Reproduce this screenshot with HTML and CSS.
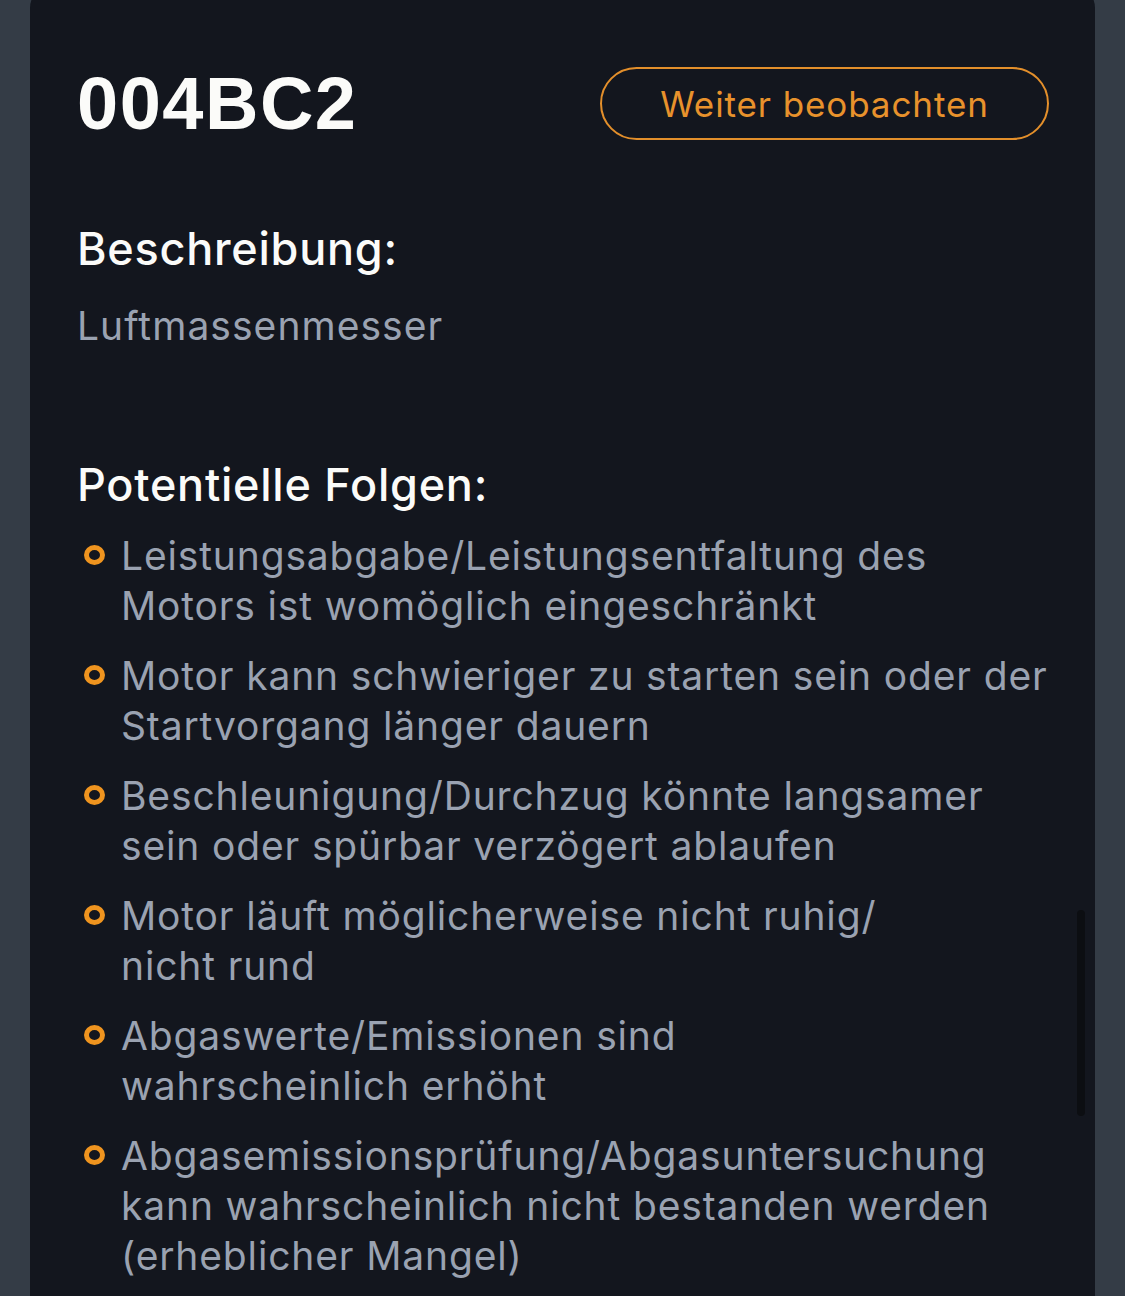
FILE: index.html
```html
<!DOCTYPE html>
<html>
<head>
    <title>004BC2</title>
    <link rel="stylesheet" href="styles.css">
</head>
<body>

<div class="card">
    <div class="head">
        <div class="code">004BC2</div>
        <a class="watch" href="#">Weiter beobachten</a>
    </div>

    <div class="label">Beschreibung:</div>
    <div class="desc">Luftmassenmesser</div>

    <div class="label label-list">Potentielle Folgen:</div>
    <ul class="effects">
        <li><span class="dot"></span><span class="txt">Leistungsabgabe/Leistungsentfaltung des<br>Motors ist womöglich eingeschränkt</span></li>
        <li><span class="dot"></span><span class="txt">Motor kann schwieriger zu starten sein oder der<br>Startvorgang länger dauern</span></li>
        <li><span class="dot"></span><span class="txt">Beschleunigung/Durchzug könnte langsamer<br>sein oder spürbar verzögert ablaufen</span></li>
        <li><span class="dot"></span><span class="txt">Motor läuft möglicherweise nicht ruhig/<br>nicht rund</span></li>
        <li><span class="dot"></span><span class="txt">Abgaswerte/Emissionen sind<br>wahrscheinlich erhöht</span></li>
        <li><span class="dot"></span><span class="txt">Abgasemissionsprüfung/Abgasuntersuchung<br>kann wahrscheinlich nicht bestanden werden<br>(erheblicher Mangel)</span></li>
    </ul>

    <div class="scrollbar"></div>
</div>

</body>
</html>
```

FILE: styles.css
```css
BODY {
    margin : 0;
    background : #343c46;
    font-family : Inter, "Noto Sans", sans-serif;
    overflow : hidden;
}
.card {
    position : relative;
    margin : -16px 30px 0 30px;
    padding : 77px 46px 60px 47px;
    background : #13161e;
    border-radius : 24px;
    min-height : 1300px;
}
.head {
    display : flex;
    justify-content : space-between;
    align-items : center;
}
.code {
    font-family : "Liberation Sans", Arial, sans-serif;
    font-weight : bold;
    font-size : 74px;
    color : #fbfbf9;
    letter-spacing : 1.5px;
}
.watch {
    display : flex;
    align-items : center;
    justify-content : center;
    box-sizing : border-box;
    width : 449px;
    height : 73px;
    border : 2px solid #e38f2b;
    border-radius : 37px;
    color : #e8922c;
    font-size : 35px;
    text-decoration : none;
    letter-spacing : 0.9px;
}
.label {
    margin-top : 75px;
    font-size : 45px;
    line-height : 56px;
    font-weight : 500;
    color : #fbfbf9;
    letter-spacing : 0.75px;
}
.label-list {
    margin-top : 106px;
}
.desc {
    margin-top : 24px;
    font-size : 39px;
    line-height : 50px;
    color : #9aa2b1;
    letter-spacing : 1.05px;
}
.effects {
    list-style : none;
    margin : 18px 0 0 0;
    padding : 0;
}
.effects LI {
    display : flex;
    margin-bottom : 20px;
    font-size : 39px;
    line-height : 50px;
    color : #9aa2b1;
    letter-spacing : 0.85px;
}
.txt {
    white-space : nowrap;
}
.dot {
    flex : none;
    box-sizing : border-box;
    width : 21px;
    height : 20px;
    margin : 14px 16px 0 7px;
    border : 5.5px solid #ef941f;
    border-radius : 50%;
}
.scrollbar {
    position : absolute;
    right : 10px;
    top : 926px;
    width : 8px;
    height : 206px;
    border-radius : 4px;
    background : #0c0e12;
}
```
